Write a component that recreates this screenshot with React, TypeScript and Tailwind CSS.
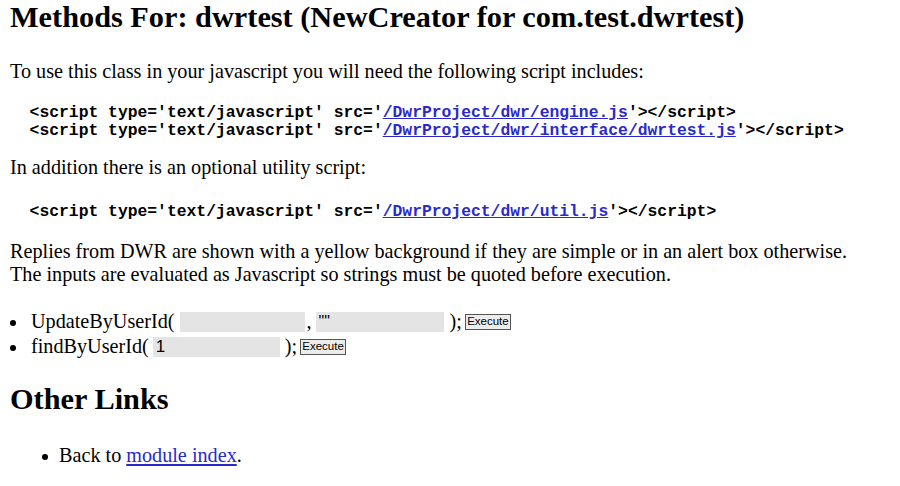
import React from 'react';

const mono = "font-['Liberation_Mono',monospace] text-[16.35px] font-bold leading-[18px] text-black";
const codeLink = 'text-[#2a2acc] underline';
const field = "h-[20px] bg-[#e4e4e4] px-[3px] font-['Liberation_Sans',sans-serif] text-[16px] outline-none";
const execBtn = "ml-[3px] h-[16px] w-[46px] border border-[#555] bg-[#ececec] font-['Liberation_Sans',sans-serif] text-[11.5px] leading-[13px]";

const Bullet = ({ gap = 'mr-[15px]' }: { gap?: string }) => (
  <span className={`${gap} mt-[3px] h-[6px] w-[6px] shrink-0 rounded-full bg-black`} />
);

export default function App() {
  return (
    <div className="min-h-[486px] bg-white px-[10px] font-['Liberation_Serif',serif] text-[20.2px] leading-[23px] text-black">
      <h2 className="pt-[2px] text-[30.3px] font-bold leading-[30px]">
        Methods For: dwrtest (NewCreator for com.test.dwrtest)
      </h2>

      <p className="mt-[28px]">To use this class in your javascript you will need the following script includes:</p>

      <pre className={`mt-[21px] ${mono}`}>
{'  <script type=\'text/javascript\' src=\''}<a href="#" className={codeLink}>/DwrProject/dwr/engine.js</a>{'\'></script>\n'}
{'  <script type=\'text/javascript\' src=\''}<a href="#" className={codeLink}>/DwrProject/dwr/interface/dwrtest.js</a>{'\'></script>'}
      </pre>

      <p className="mt-[16px]">In addition there is an optional utility script:</p>

      <pre className={`mt-[24px] ${mono}`}>
{'  <script type=\'text/javascript\' src=\''}<a href="#" className={codeLink}>/DwrProject/dwr/util.js</a>{'\'></script>'}
      </pre>

      <p className="mt-[19px]">
        Replies from DWR are shown with a yellow background if they are simple or in an alert box otherwise.
        <br />
        The inputs are evaluated as Javascript so strings must be quoted before execution.
      </p>

      <ul className="mt-[23px] pl-[0px]">
        <li className="flex h-[25px] items-center">
          <Bullet />
          <span>UpdateByUserId(</span>
          <input className={`ml-[5px] w-[125px] ${field}`} defaultValue="" />
          <span className="ml-[2px]">,</span>
          <input className={`ml-[4px] w-[128px] ${field}`} defaultValue='""' />
          <span className="ml-[6px]">);</span>
          <button className={execBtn}>Execute</button>
        </li>
        <li className="flex h-[25px] items-center">
          <Bullet />
          <span>findByUserId(</span>
          <input className={`ml-[4px] w-[127px] ${field} text-[17px]`} defaultValue="1" />
          <span className="ml-[5px]">);</span>
          <button className={execBtn}>Execute</button>
        </li>
      </ul>

      <h2 className="mt-[25px] text-[30.3px] font-bold leading-[30px]">Other Links</h2>

      <ul className="mt-[30px] pl-[32px]">
        <li className="flex items-center">
          <Bullet gap="mr-[11px]" />
          <span>
            Back to <a href="#" className="text-[#2a2acc] underline">module index</a>.
          </span>
        </li>
      </ul>
    </div>
  );
}
